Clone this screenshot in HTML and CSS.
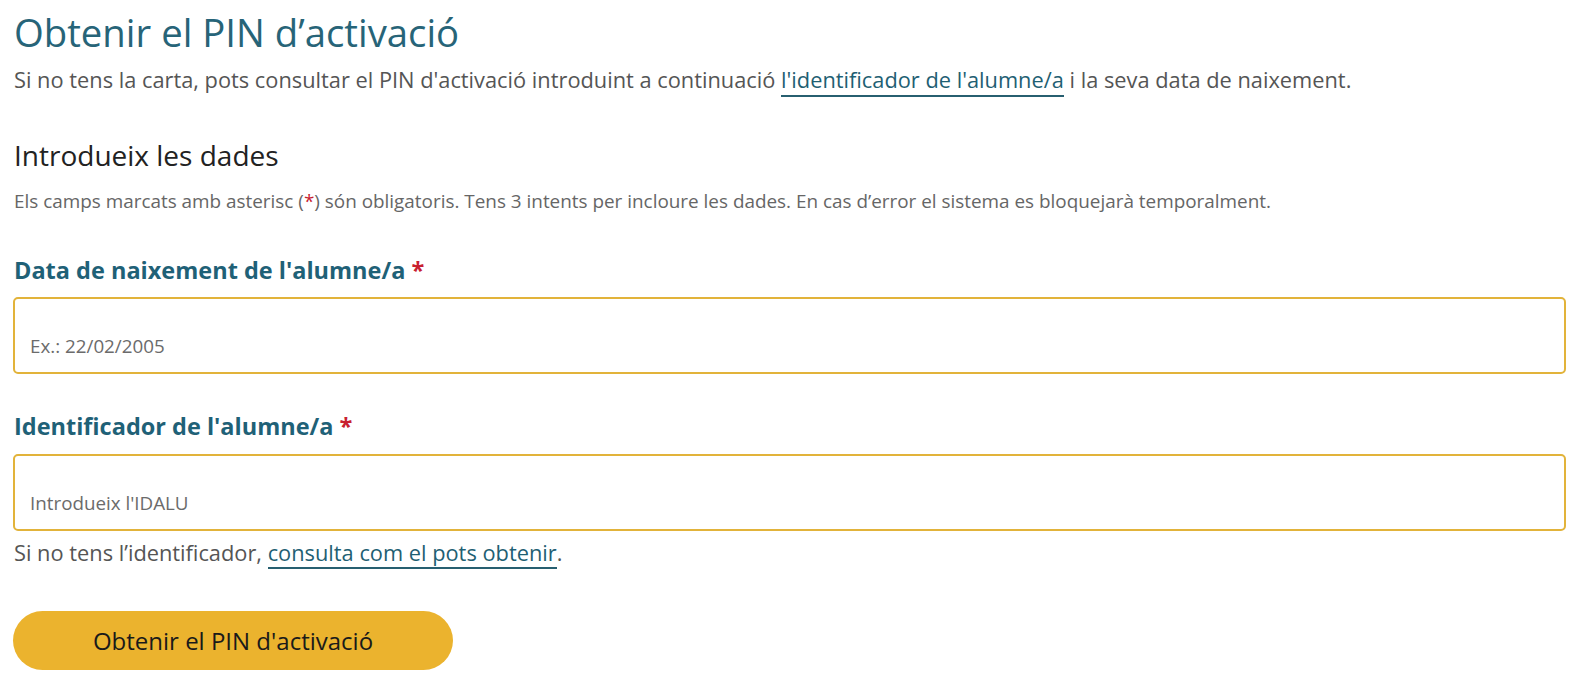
FILE: index.html
```html
<!DOCTYPE html>
<html lang="ca">
<head>
<meta charset="utf-8">
<title>Obtenir el PIN d'activació</title>
<link rel="stylesheet" href="styles.css">
</head>
<body>
<main class="page">
  <h1 class="title">Obtenir el PIN d’activació</h1>
  <p class="intro">Si no tens la carta, pots consultar el PIN d'activació introduint a continuació <a class="link" href="#">l'identificador de l'alumne/a</a> i la seva data de naixement.</p>
  <h2 class="subtitle">Introdueix les dades</h2>
  <p class="note">Els camps marcats amb asterisc (<span class="req">*</span>) són obligatoris. Tens 3 intents per incloure les dades. En cas d’error el sistema es bloquejarà temporalment.</p>
  <form class="form">
    <div class="field">
      <label class="label" for="dob">Data de naixement de l'alumne/a <span class="req">*</span></label>
      <input class="input" id="dob" type="text" placeholder="Ex.: 22/02/2005">
    </div>
    <div class="field field-second">
      <label class="label" for="idalu">Identificador de l'alumne/a <span class="req">*</span></label>
      <input class="input" id="idalu" type="text" placeholder="Introdueix l'IDALU">
      <p class="help">Si no tens l’identificador, <a class="link" href="#">consulta com el pots obtenir</a>.</p>
    </div>
    <button class="button" type="button">Obtenir el PIN d'activació</button>
  </form>
</main>
</body>
</html>
```
FILE: styles.css
```css
* { box-sizing: border-box; }
html, body { margin: 0; padding: 0; background: #fff; }
body {
  font-family: "Open Sans", "Noto Sans", "Liberation Sans", sans-serif;
  color: #555;
}
.page {
  padding: 9px 20px 0 13px;
}
.title {
  margin: 0 0 0 1px;
  font-size: 38.3px;
  line-height: 46px;
  font-weight: 400;
  color: #276478;
}
.intro {
  margin: 9px 0 0 1px;
  font-size: 21.8px;
  line-height: 32px;
  color: #555;
}
.link {
  color: #1f5f73;
  text-decoration: none;
  border-bottom: 2px solid #275f70;
  padding-bottom: 1px;
}
.subtitle {
  margin: 41px 0 0 1px;
  font-size: 28px;
  line-height: 36px;
  font-weight: 400;
  color: #222;
}
.note {
  margin: 15px 0 0 1px;
  font-size: 18.9px;
  line-height: 26px;
  color: #666;
}
.req { color: #c8202f; }
.form { margin: 0; }
.field { display: flex; flex-direction: column; }
.label {
  margin: 40px 0 0 1px;
  font-size: 23.5px;
  line-height: 32px;
  font-weight: 700;
  color: #1f6177;
}
.field-second .label { margin-top: 36px; }
.input {
  margin-top: 11px;
  width: 100%;
  height: 77px;
  border: 2px solid #e2b33a;
  border-radius: 5px;
  padding: 20px 15px 0;
  font-family: inherit;
  font-size: 18.8px;
  color: #333;
  background: #fff;
  outline: none;
}
.field-second .input { margin-top: 12px; }
.input::placeholder { color: #6b6b6b; opacity: 1; }
.help {
  margin: 6px 0 0 1px;
  font-size: 21.8px;
  line-height: 32px;
  color: #555;
}
.help .link { padding-bottom: 0; }
.button {
  margin-top: 42px;
  width: 440px;
  height: 59px;
  border: none;
  border-radius: 30px;
  background: #ebb32e;
  color: #1a1a1a;
  font-family: inherit;
  font-size: 24px;
  cursor: pointer;
}
```
